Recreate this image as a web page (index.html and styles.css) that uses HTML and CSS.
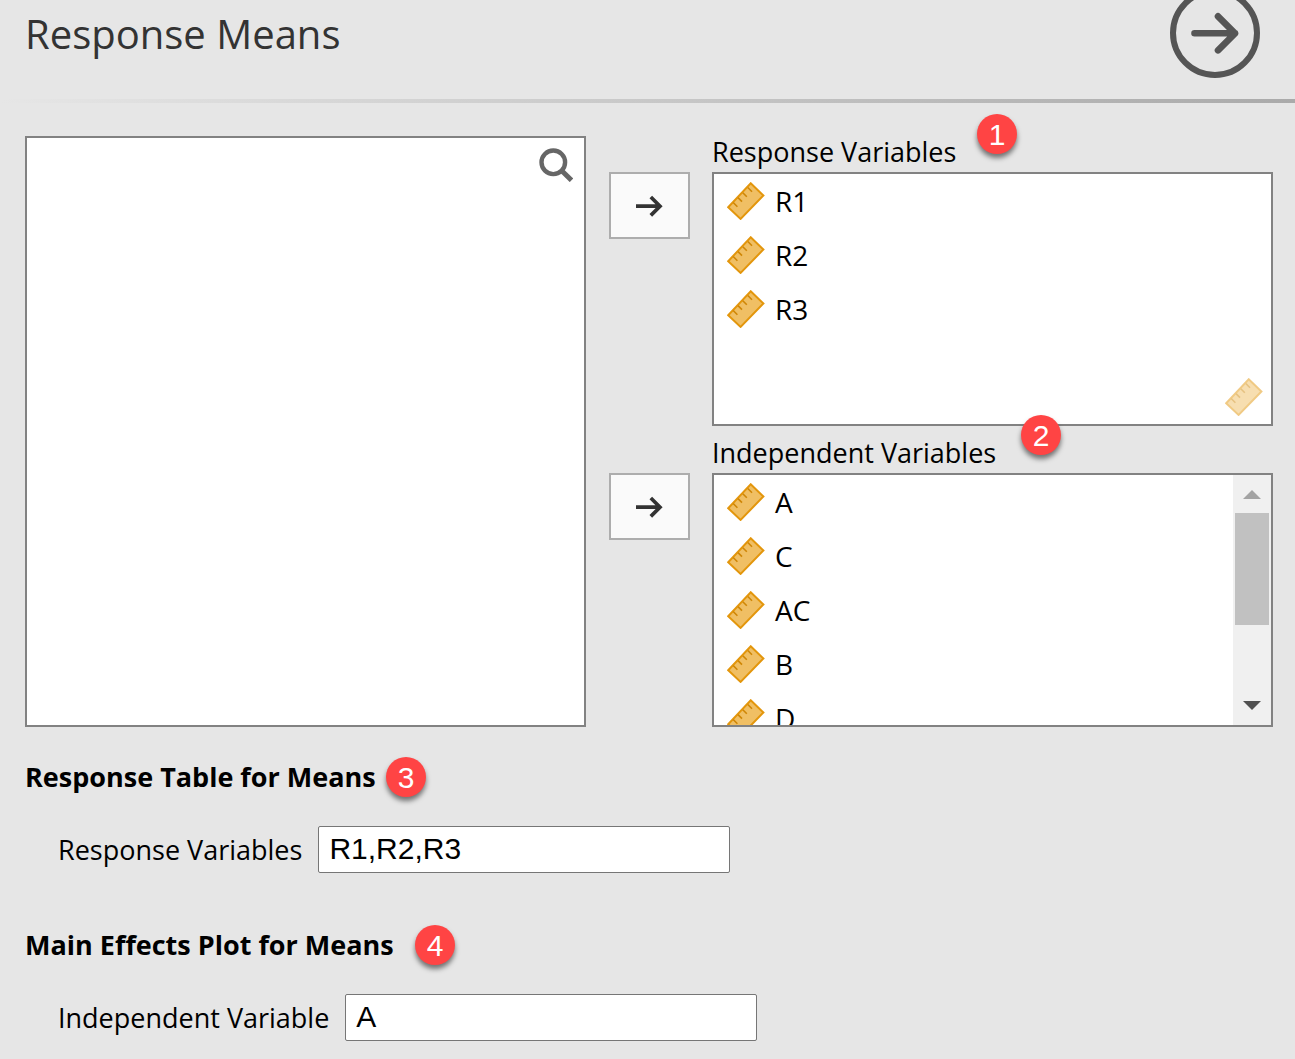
FILE: index.html
```html
<!DOCTYPE html>
<html lang="en">
<head>
<meta charset="utf-8">
<meta name="viewport" content="width=device-width, initial-scale=1">
<title>Response Means</title>
<link rel="stylesheet" href="styles.css">
</head>
<body>
<svg class="defs" aria-hidden="true">
  <symbol id="ruler" viewBox="0 0 38 38">
    <path d="M23.7 1.3L36.4 13.5L13.6 36.9L1.2 25.2Z" fill="#f0bf64" stroke="#e3960c" stroke-width="2"/>
    <path d="M6.2 20.5L10.4 24.7M11 15.6L15 19.6M15.8 10.7L19.8 14.7M20.8 5.5L25 9.7" fill="none" stroke="#cf8606" stroke-width="1.6"/>
  </symbol>
  <symbol id="arrow" viewBox="0 0 28 22">
    <path d="M0 11.2H24M14.8 2L24 11.2L14.8 20.4" fill="none" stroke="#333" stroke-width="3.7"/>
  </symbol>
</svg>

<header class="header">
  <h1 class="title">Response Means</h1>
  <button class="run" type="button" aria-label="Hide options">
    <svg width="90" height="90" viewBox="0 0 90 90" fill="none" stroke="#555" stroke-linecap="round" stroke-linejoin="round">
      <circle cx="45" cy="45" r="42" stroke-width="6"/>
      <path d="M24.5 45.3H65M48 28.3L65 45.3L48 62.3" stroke-width="6.6"/>
    </svg>
  </button>
</header>
<div class="rule"></div>

<main class="main">
  <div class="supplier">
    <div class="box source">
      <button class="search" type="button" aria-label="Search variables">
        <svg width="34" height="34" viewBox="0 0 34 34" fill="none" stroke="#666" stroke-width="4.4">
          <circle cx="14.3" cy="14.3" r="11.8"/>
          <path d="M22.5 22.5L32.5 32.3" stroke-width="5"/>
        </svg>
      </button>
    </div>

    <h2 class="target-label">Response Variables<span class="badge badge-1">1</span></h2>
    <button class="assign" type="button" aria-label="Add response variable"><svg width="28" height="22"><use href="#arrow"/></svg></button>
    <div class="box target">
      <ul class="items">
        <li class="item"><svg class="icon"><use href="#ruler"/></svg>R1</li>
        <li class="item"><svg class="icon"><use href="#ruler"/></svg>R2</li>
        <li class="item"><svg class="icon"><use href="#ruler"/></svg>R3</li>
      </ul>
      <svg class="icon allowed"><use href="#ruler"/></svg>
    </div>

    <h2 class="target-label">Independent Variables<span class="badge badge-2">2</span></h2>
    <button class="assign" type="button" aria-label="Add independent variable"><svg width="28" height="22"><use href="#arrow"/></svg></button>
    <div class="box target">
      <ul class="items">
        <li class="item"><svg class="icon"><use href="#ruler"/></svg>A</li>
        <li class="item"><svg class="icon"><use href="#ruler"/></svg>C</li>
        <li class="item"><svg class="icon"><use href="#ruler"/></svg>AC</li>
        <li class="item"><svg class="icon"><use href="#ruler"/></svg>B</li>
        <li class="item"><svg class="icon"><use href="#ruler"/></svg>D</li>
      </ul>
      <div class="scrollbar" aria-hidden="true">
        <svg class="step" viewBox="0 0 38 38"><path d="M10 24L19 15L28 24Z" fill="#a3a3a3"/></svg>
        <div class="thumb"></div>
        <svg class="step" viewBox="0 0 38 38"><path d="M10 14L19 23L28 14Z" fill="#505050"/></svg>
      </div>
    </div>
  </div>

  <section class="section">
    <h2 class="section-title">Response Table for Means<span class="badge badge-3">3</span></h2>
    <div class="field">
      <label for="resp">Response Variables</label>
      <input id="resp" type="text" value="R1,R2,R3">
    </div>
  </section>

  <section class="section">
    <h2 class="section-title">Main Effects Plot for Means<span class="badge badge-4">4</span></h2>
    <div class="field">
      <label for="indep">Independent Variable</label>
      <input id="indep" type="text" value="A">
    </div>
  </section>
</main>
</body>
</html>
```

FILE: styles.css
```css
* {
  box-sizing: border-box;
}

body {
  margin: 0;
  background: #e6e6e6;
  color: #000;
  font-family: "Segoe UI", "Open Sans", sans-serif;
  font-size: 27px;
  line-height: 36px;
}

h1,
h2,
ul {
  margin: 0;
  padding: 0;
  font-size: inherit;
  font-weight: 400;
}

button {
  padding: 0;
  border: 0;
  background: none;
}

svg {
  display: block;
}

.defs {
  position: absolute;
  width: 0;
  height: 0;
}

/* The round button is cut by the top edge of the panel. */
.header {
  display: flex;
  align-items: center;
  justify-content: space-between;
  margin-top: -12px;
  padding: 0 35px 21px 25px;
}

.title {
  padding-top: 2px;
  color: #333;
  font-size: 40px;
  line-height: 56px;
}

.rule {
  height: 4px;
  background: linear-gradient(to right, #e6e6e6, #aaa);
}

.main {
  padding: 33px 22px 16px 25px;
}

.supplier {
  display: grid;
  grid-template-columns: 1fr 82px 1fr;
  grid-template-rows: 36px 254px 47px 254px;
  column-gap: 22px;
}

.box {
  border: 2px solid #828282;
  background: #fff;
}

.source {
  grid-column: 1;
  grid-row: 1 / span 4;
  display: flex;
  align-items: flex-start;
  justify-content: flex-end;
  padding: 10px 11px;
}

.target-label {
  grid-column: 3;
  align-self: end;
  position: relative;
  padding-bottom: 4px;
  line-height: 32px;
}

.assign {
  grid-column: 2;
  justify-self: end;
  display: flex;
  align-items: center;
  justify-content: center;
  width: 81px;
  height: 67px;
  border: 2px solid #adadad;
  background: #fafafa;
}

.target {
  grid-column: 3;
  display: flex;
  overflow: hidden;
}

.items {
  flex: 1;
  padding-left: 13px;
  list-style: none;
}

.item {
  display: flex;
  align-items: center;
  gap: 10px;
  height: 54px;
  font-size: 28px;
}

.icon {
  flex: none;
  width: 38px;
  height: 38px;
}

.allowed {
  align-self: flex-end;
  margin: 8px;
  opacity: 0.5;
}

.scrollbar {
  display: flex;
  flex-direction: column;
  width: 38px;
  background: #f0f0f0;
}

.step {
  width: 38px;
  height: 38px;
}

.thumb {
  height: 112px;
  margin: 0 2px auto;
  background: #c1c1c1;
}

.section {
  margin-top: 30px;
}

.section + .section {
  margin-top: 52px;
}

.section-title {
  position: relative;
  font-weight: 700;
  line-height: 40px;
}

.field {
  display: flex;
  align-items: center;
  gap: 16px;
  margin-top: 29px;
  padding-left: 33px;
}

.field input {
  width: 412px;
  height: 47px;
  padding: 0 10px 2px;
  border: 1px solid #767676;
  border-radius: 2px;
  background: #fff;
  color: #000;
  font-family: Arial, "Liberation Sans", sans-serif;
  font-size: 30px;
}

.badge {
  position: absolute;
  top: 0;
  width: 40px;
  height: 40px;
  border-radius: 50%;
  background: #ff4444;
  box-shadow: 0 4px 5px rgba(0, 0, 0, 0.5);
  color: #fff;
  font-family: "Liberation Sans", sans-serif;
  font-size: 30px;
  font-weight: 400;
  line-height: 42px;
  text-align: center;
}

.badge-1 {
  top: -22px;
  left: 265px;
}

.badge-2 {
  top: -22px;
  left: 309px;
}

.badge-3 {
  left: 361px;
}

.badge-4 {
  left: 390px;
}
```
